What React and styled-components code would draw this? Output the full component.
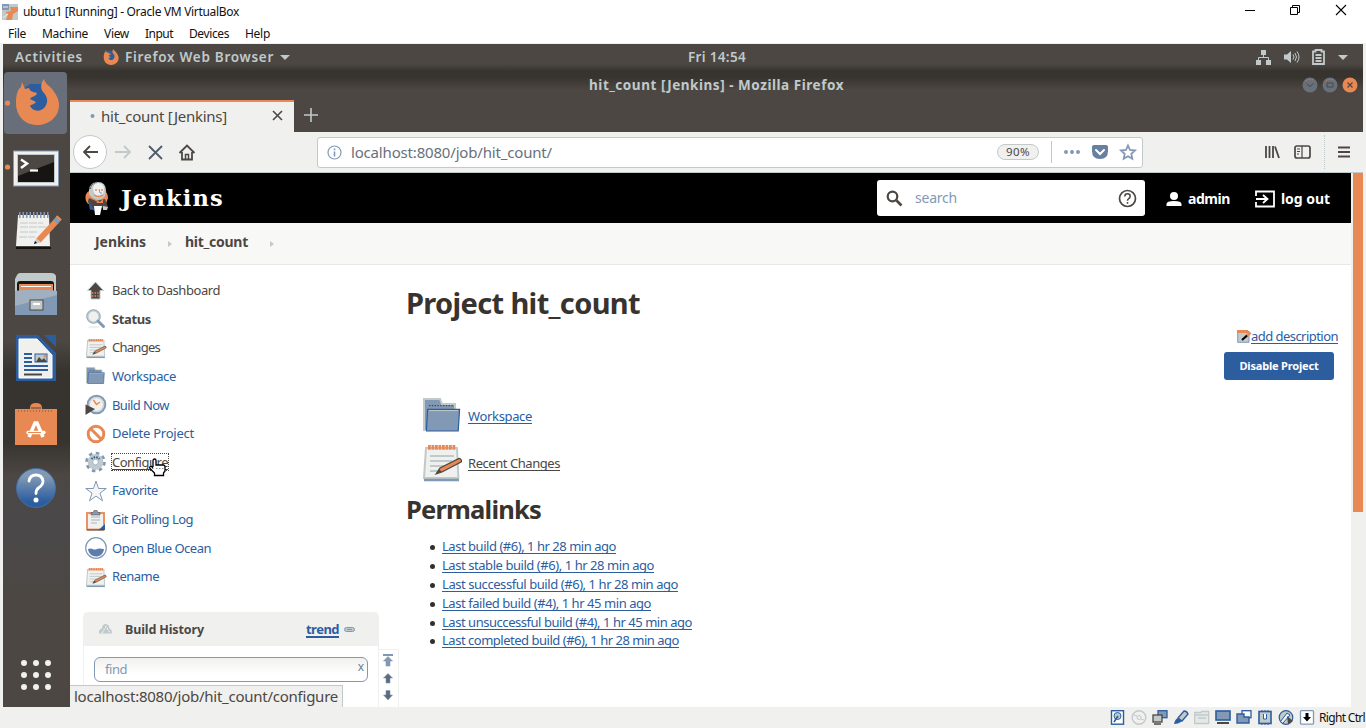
import React, { useLayoutEffect, useRef, useState } from "react";
import styled, { createGlobalStyle, css } from "styled-components";

const c = {
  shell: "#4c4743",
  black: "#000000",
  orange: "#e88954",
  blue: "#2c5d9f",
  steel: "#8299b5",
  silver: "#c0caca",
  light: "#f0f0ee",
  white: "#ffffff",
};

const Global = createGlobalStyle`
  * { box-sizing: border-box; }
  html, body { margin: 0; padding: 0; background: ${c.light}; overflow: hidden; }
  body { font-family: "Noto Sans", "Open Sans", sans-serif; font-size: 13px; color: ${c.shell}; }
  svg { display: block; flex: none; overflow: visible; }
`;

/* ---------- text ---------- */

const Label = styled.span`
  display: inline-block;
  flex: none;
  white-space: pre;
  font-size: ${(p) => p.$size || 13}px;
  font-weight: ${(p) => (p.$bold ? p.$bold : 400)};
  color: ${(p) => p.$color || c.shell};
  line-height: ${(p) => p.$lh || "18px"};
  font-family: ${(p) => p.$family || "inherit"};
  ${(p) =>
    p.$underline &&
    css`
      text-decoration: underline;
      text-decoration-thickness: ${p.$underline}px;
      text-underline-offset: 2px;
      text-decoration-skip-ink: none;
    `}
`;

/* Tracks the letters so that the line takes the given width. */
function Text({ width, children, ...rest }) {
  const ref = useRef(null);
  const [tracking, setTracking] = useState(null);
  useLayoutEffect(() => {
    if (!width || tracking !== null) return;
    const natural = ref.current.getBoundingClientRect().width;
    setTracking((width - natural) / children.length);
  }, [width, tracking, children]);
  return (
    <Label ref={ref} style={tracking === null ? undefined : { letterSpacing: tracking }} {...rest}>
      {children}
    </Label>
  );
}

/* ---------- host window ---------- */

const Screen = styled.div`
  width: 1366px;
  height: 728px;
  display: flex;
  flex-direction: column;
  background: ${c.light};
`;
const HostTitle = styled.header`
  height: 23px;
  flex: none;
  display: flex;
  align-items: center;
  gap: 5px;
  padding: 0 20px 0 2px;
  background: ${c.white};
`;
const HostButtons = styled.div`
  margin-left: auto;
  display: flex;
  gap: 35px;
  padding-bottom: 2px;
`;
const HostMenu = styled.nav`
  height: 20px;
  flex: none;
  display: flex;
  align-items: center;
  gap: 16px;
  padding: 1px 0 0 8px;
  background: ${c.white};
`;
const HostStatus = styled.footer`
  height: 21px;
  flex: none;
  display: flex;
  align-items: center;
  justify-content: flex-end;
  gap: 4px;
  padding-right: 1px;
`;
const Devices = styled.div`
  display: flex;
  gap: 5px;
`;

/* ---------- guest desktop ---------- */

const Guest = styled.div`
  height: 663px;
  margin: 1px 3px 0;
  flex: none;
  display: flex;
  flex-direction: column;
  overflow: hidden;
  background: linear-gradient(${c.shell} 20px, #37332f 27px, #37332f 33px, ${c.shell} 46px);
`;
const TopBar = styled.div`
  height: 27px;
  flex: none;
  display: flex;
  align-items: center;
  padding: 0 15px 1px 12px;
`;
const AppMenu = styled.div`
  display: flex;
  align-items: center;
  gap: 6px;
  width: 585px;
  margin-left: 20px;
`;
const Indicators = styled.div`
  margin-left: auto;
  display: flex;
  align-items: center;
  gap: 13px;
`;
const Workspace = styled.div`
  flex: 1;
  min-height: 0;
  display: flex;
`;
const Dock = styled.aside`
  width: 67px;
  flex: none;
  display: flex;
  flex-direction: column;
  gap: 2px;
  padding: 1px 3px 17px 1px;
  background: linear-gradient(transparent 60px, ${c.shell} 62px, ${c.shell} 270px, #37332f 300px, #37332f 370px, ${c.shell} 405px, #4a484a 450px, ${c.shell} 520px);
`;
const DockTile = styled.div`
  height: 62px;
  flex: none;
  border-radius: 4px;
  background: ${(p) => (p.$active ? "#686f7a" : "transparent")};
`;
const AppsTile = styled.div`
  margin-top: auto;
  padding-left: 17px;
`;
const Browser = styled.main`
  flex: 1;
  min-width: 0;
  display: flex;
  flex-direction: column;
`;
const BrowserTitle = styled.div`
  height: 29px;
  flex: none;
  display: flex;
  align-items: center;
  justify-content: flex-end;
  padding: 0 5px 2px 0;
`;
const WindowButtons = styled.div`
  display: flex;
  gap: 4px;
  margin-left: 458px;
`;
const Tabs = styled.div`
  height: 32px;
  flex: none;
  display: flex;
  align-items: center;
`;
const NewTab = styled.div`
  padding-bottom: 2px;
`;
const Tab = styled.div`
  width: 224px;
  height: 32px;
  display: flex;
  align-items: center;
  padding: 0 11px 3px 20px;
  gap: 6px;
  border-top: 2px solid ${c.orange};
  background: ${c.light};
  margin-right: 10px;
  svg:last-child { margin-left: auto; }
`;
const NavBar = styled.div`
  height: 41px;
  flex: none;
  display: flex;
  align-items: center;
  background: ${c.light};
  border-bottom: 1px solid ${c.silver};
  padding: 0 13px 0 3px;
`;
const NavButtons = styled.div`
  width: 244px;
  display: flex;
  align-items: center;
`;
const BackButton = styled.div`
  width: 34px;
  height: 34px;
  border: 1px solid ${c.silver};
  border-radius: 50%;
  background: ${c.white};
  display: grid;
  place-items: center;
`;
const NavIcon = styled.div`
  width: 32px;
  display: grid;
  place-items: center;
`;
const UrlBar = styled.div`
  width: 826px;
  height: 31px;
  border: 1px solid ${c.silver};
  border-radius: 3px;
  background: ${c.white};
  display: flex;
  align-items: center;
  padding: 0 6px 0 9px;
  gap: 9px;
`;
const UrlTools = styled.div`
  margin-left: auto;
  display: flex;
  align-items: center;
  gap: 12px;
`;
const Zoom = styled.div`
  width: 42px;
  height: 16px;
  display: grid;
  place-items: center;
  border: 1px solid ${c.silver};
  border-radius: 8px;
  background: ${c.light};
`;
const Divider = styled.div`
  width: 1px;
  height: ${(p) => p.$h}px;
  border-left: 1px ${(p) => (p.$dotted ? "dotted" : "solid")} ${c.silver};
`;
const BarEnd = styled.div`
  margin-left: auto;
  display: flex;
  align-items: center;
  gap: 13px;
`;

/* ---------- Jenkins page ---------- */

const Viewport = styled.div`
  position: relative;
  flex: 1;
  min-height: 0;
  display: flex;
  background: ${c.white};
  overflow: hidden;
`;
const Page = styled.div`
  width: 1281px;
  flex: none;
  display: flex;
  flex-direction: column;
`;
const Scrollbar = styled.div`
  width: 12px;
  padding-left: 2px;
  background: ${c.light};
`;
const Thumb = styled.div`
  height: 339px;
  background: ${c.orange};
`;
const PageHeader = styled.header`
  height: 50px;
  flex: none;
  display: flex;
  align-items: center;
  background: ${c.black};
  padding: 0 21px 0 14px;
`;
const Brand = styled.div`
  display: flex;
  align-items: center;
  gap: 11px;
`;
const Search = styled.div`
  width: 268px;
  height: 36px;
  margin-left: auto;
  display: flex;
  align-items: center;
  gap: 12px;
  padding: 0 8px 0 9px;
  background: ${c.white};
  border-radius: 3px;
  svg:last-child { margin-left: auto; }
`;
const UserLink = styled.a`
  display: flex;
  align-items: center;
  gap: 6px;
  margin-left: ${(p) => p.$ml}px;
  padding-top: 1px;
`;
const Crumbs = styled.div`
  height: 42px;
  flex: none;
  display: flex;
  align-items: center;
  padding: 0 0 3px 25px;
  background: #f8f8f7;
  border-bottom: 1px solid #e8e8e6;
`;
const CrumbArrow = styled.div`
  width: ${(p) => p.$w}px;
  padding: 3px 0 0 ${(p) => p.$pl}px;
`;
const PageBody = styled.div`
  flex: 1;
  min-height: 0;
  display: flex;
`;
const Side = styled.div`
  width: 336px;
  flex: none;
  padding: 10.7px 0 0 13px;
`;
const Task = styled.div`
  height: 28.65px;
  display: flex;
  align-items: center;
  gap: 5px;
  padding-left: 2px;
  svg { margin-top: 2px; }
`;
const FocusRing = styled.span`
  position: relative;
  outline: 1px dotted ${c.shell};
  height: 16px;
  display: flex;
  align-items: center;
`;
const Pointer = styled.div`
  position: absolute;
  left: 36px;
  top: 2px;
`;
const HistoryArea = styled.div`
  display: flex;
  margin-top: 21px;
`;
const History = styled.section`
  width: 296px;
  height: 110px;
  border: 1px solid ${c.light};
  border-radius: 5px 5px 0 0;
`;
const HistoryHead = styled.div`
  height: 33px;
  display: flex;
  align-items: center;
  background: ${c.light};
  padding: 0 0 0 14px;
`;
const HistoryTitle = styled.div`
  width: 194px;
  padding-left: 13px;
`;
const TrendEnd = styled.div`
  padding-left: 5px;
`;
const Find = styled.div`
  height: 25px;
  margin: 11px 10px;
  padding: 0 3px 0 10px;
  display: flex;
  align-items: center;
  justify-content: space-between;
  border: 1px solid ${c.steel};
  border-radius: 6px;
  background: linear-gradient(${c.light}, ${c.white} 70%);
`;
const ClearMark = styled.div`
  padding-bottom: 6px;
`;
const Pager = styled.div`
  width: 20px;
  height: 60px;
  margin-top: 37px;
  border: 1px solid ${c.light};
  border-left: 0;
  padding: 4px 1px 0 0;
  display: flex;
  flex-direction: column;
  align-items: center;
  gap: 4.5px;
`;
const Main = styled.div`
  flex: 1;
  padding: 17px 13px 0 0;
  display: flex;
  flex-direction: column;
`;
const Actions = styled.div`
  display: flex;
  flex-direction: column;
  align-items: flex-end;
`;
const DescLink = styled.div`
  height: 18px;
  margin-top: 3px;
  display: flex;
  align-items: center;
`;
const Button = styled.button`
  width: 110px;
  height: 28px;
  margin: 7px 4px 0 0;
  padding: 0;
  border: 0;
  border-radius: 3px;
  background: ${c.blue};
  font-family: inherit;
`;
const BigLinks = styled.div`
  margin-top: 12px;
  padding-left: 16px;
`;
const BigLink = styled.div`
  height: 47px;
  display: flex;
  align-items: center;
  gap: 6px;
`;
const Heading = styled.div`
  height: ${(p) => p.$h}px;
  margin-top: ${(p) => p.$mt || 0}px;
  display: flex;
  align-items: center;
`;
const Links = styled.ul`
  list-style: none;
  margin: 8px 0 0;
  padding: 0 0 0 24px;
`;
const LinkRow = styled.li`
  height: 18.8px;
  display: flex;
  align-items: center;
  gap: 7px;
  &::before {
    content: "";
    width: 5px;
    height: 5px;
    margin-top: 3px;
    border-radius: 50%;
    background: #332f2c;
  }
`;
const StatusTip = styled.div`
  position: absolute;
  left: 0;
  bottom: 0;
  width: 273px;
  height: 22px;
  padding: 0 0 2px 4px;
  display: flex;
  align-items: center;
  background: ${c.light};
  border: 1px solid ${c.silver};
  border-width: 1px 1px 0 0;
`;

/* ---------- drawings ---------- */

const Svg = ({ w, h = w, box, children, ...rest }) => (
  <svg width={w} height={h} viewBox={box || `0 0 ${w} ${h}`} fill="none" {...rest}>
    {children}
  </svg>
);

const Fox = ({ size }) => (
  <Svg w={size} h={size} box="0 0 44 46">
    <path d="M8 10 15 5l11 0 8 8 3 14-8 11H15L8 28Z" fill={c.blue} />
    <path d="M1 24C1 15 3 10 6 8l1-5 3 7 4-1c1 3 3 4 8 5-1 4-5 3-7 6l6 3c-2 3-5 2-6 4 3 6 11 6 15 1 4-6 2-11-2-15-3-4-2-9 1-13 1 5 5 6 8 10 4 5 7 10 7 16 0 12-10 20-22 20S1 37 1 24Z" fill={c.orange} />
  </Svg>
);

const NotePad = ({ size }) => (
  <Svg w={size} h={size} box="0 0 20 20">
    <path d="M2 2.500h15.500l.7 15H1Z" fill={c.light} stroke={c.silver} />
    <path d="M1 18.500h17.500" stroke={c.steel} strokeWidth="1.200" />
    <path d="M3 2.200h14" stroke={c.orange} strokeWidth="2.400" strokeDasharray="1.400 .35" />
    <path d="M4 6.500h12M4 9h11M4 11.500h8M4 14h5" stroke={c.silver} strokeWidth=".9" />
    <path d="m7 15.500 2-3L18.500 7.700q1.500.3 1.200 1.700L10 14.500Z" fill={c.orange} stroke={c.shell} strokeWidth=".6" />
    <path d="m7 15.500 1.500-2.300 1.500 1.100Z" fill={c.shell} />
  </Svg>
);

const Folder = ({ size }) => (
  <Svg w={size} h={size} box="0 0 20 20">
    <path d="M1 17.500v-16h8l1 2.500h6.500v3" fill={c.steel} stroke={c.silver} />
    <path d="M3.500 4.800h12" stroke={c.shell} strokeWidth=".7" strokeDasharray=".7 .7" />
    <path d="M2.800 6.700h16l-.7 10.800H2.200Z" fill={c.steel} stroke={c.blue} strokeWidth=".6" />
    <path d="M3.500 7.300H18" stroke={c.silver} strokeWidth=".5" />
  </Svg>
);

const taskIcons = {
  up: (
    <>
      <path d="m10.500 1 8 8.500H15V18H6V9.500H2.500Z" fill={c.shell} stroke={c.silver} />
      <path d="M7 12h7M7 15h7" stroke={c.orange} strokeWidth="1.300" strokeDasharray="1.400 1.200" />
    </>
  ),
  lens: (
    <>
      <ellipse cx="9" cy="18" rx="6" ry="1.300" fill={c.light} />
      <circle cx="8.500" cy="7.500" r="6" fill={c.light} stroke={c.silver} strokeWidth="2.200" />
      <circle cx="8.500" cy="7.500" r="6.800" stroke={c.steel} strokeWidth=".7" />
      <path d="m13 12 5.500 5.500" stroke={c.steel} strokeWidth="3" strokeLinecap="round" />
    </>
  ),
  clock: (
    <>
      <circle cx="11.500" cy="9.500" r="8.800" fill={c.light} stroke={c.steel} strokeWidth="2" />
      <circle cx="11.500" cy="9.500" r="7" stroke={c.silver} />
      <path d="m8.500 5 3 4.500L15 7" stroke={c.orange} strokeWidth="1.500" />
      <path d="M.5 9.500 10 14 .5 20Z" fill={c.shell} />
    </>
  ),
  no: (
    <>
      <circle cx="11" cy="10" r="7.800" stroke={c.orange} strokeWidth="3" />
      <path d="m5.500 4.500 11 11" stroke={c.orange} strokeWidth="3" />
    </>
  ),
  gear: (
    <>
      <circle cx="10.500" cy="10" r="8.300" stroke={c.steel} strokeWidth="4" strokeDasharray="3.300 3.220" />
      <circle cx="10.500" cy="10" r="5.400" stroke={c.silver} strokeWidth="5" />
      <path d="M6.500 7a5.500 5.500 0 0 1 8 0" stroke={c.blue} strokeWidth="2" strokeDasharray="1.500 1" />
      <circle cx="10.500" cy="10" r="2.800" fill={c.white} stroke={c.steel} strokeWidth=".7" />
    </>
  ),
  star: <path d="m11 0 2.500 7.500h7.800l-6.300 4.600 2.500 7.700-6.500-4.700-6.500 4.700 2.500-7.700L.7 7.500h7.800Z" fill="#f6f6f5" stroke={c.steel} />,
  clip: (
    <>
      <rect x="2" y="3" width="17" height="16.500" fill={c.light} stroke={c.orange} strokeWidth="1.800" />
      <path d="M6 7h9M6 10h9M6 13h6" stroke={c.silver} strokeWidth="1.500" />
      <path d="M13.500 20 20 14v6Z" fill={c.blue} />
      <path d="M6 2.500h2L9 .5h3l1 2h2V5H6Z" fill={c.steel} stroke={c.shell} strokeWidth=".5" />
      <path d="M2 20h17" stroke={c.shell} />
    </>
  ),
  ocean: (
    <>
      <circle cx="11" cy="10" r="10.300" fill={c.white} stroke={c.steel} strokeWidth="1.200" />
      <path d="M3 11c4-2 5 2 9 0 3-1.600 5 .6 7 0-.6 5-4 7.500-8 7.500s-7.500-3-8-7.500Z" fill="#5b7eac" />
    </>
  ),
};

const TaskIcon = ({ name }) => {
  if (name === "note") return <Svg w={22} h={21} box="-0.500 0 22 21"><NotePad size={21} /></Svg>;
  if (name === "folder") return <Svg w={22} h={21} box="-0.500 0 22 21"><Folder size={20} /></Svg>;
  return <Svg w={22} h={21}>{taskIcons[name]}</Svg>;
};

const Hand = () => (
  <Svg w={18} h={18}>
    <path d="M5 9V2.500a1.500 1.500 0 0 1 3 0V7h7.500q1.500 0 1.500 2v4l-1.500 2v2.500h-9V15L2 10.500Q1 9 2.500 8.500T5 10.500" fill={c.white} stroke={c.black} strokeWidth="1.300" />
    <path d="M8 10.500h8" stroke={c.steel} strokeDasharray="1.500 1.500" />
  </Svg>
);

const Butler = () => (
  <Svg w={26} h={34}>
    <path d="M2 20Q0 13 5 10l14-1q5 2 5 8l-2 6H4Z" fill={c.orange} />
    <path d="M5 9Q6 1 14 1t8 9q0 8-8 9-6-1-9-6Z" fill={c.silver} />
    <path d="M9 8q0-5 5-6 6 0 6 6l-1 5-5 2q-4-1-5-7Z" fill={c.light} />
    <path d="M6 8q1-6 7-7" stroke={c.shell} strokeDasharray="1.500 1" strokeWidth="1.500" />
    <path d="M11 9h2m4 0h2M10 14q5 3 9 0" stroke={c.orange} strokeWidth="1.400" />
    <path d="m15 8 1 4h2" stroke={c.steel} />
    <path d="m5 17 7 3 9-2 3 8-8 1-10 2-2-9Z" fill={c.shell} />
    <path d="M5 18q1 7 7 12l-6-2Z" fill={c.blue} />
    <path d="m12 19 4 2 3-3v4h-6Z" fill={c.orange} />
    <path d="M10 25h8l-2 9h-5Z" fill={c.white} />
    <path d="m19 25 5 1-1 3h-4Z" fill={c.silver} />
  </Svg>
);

const dockArt = [
  <g transform="translate(10 7)"><Fox size={46} /></g>,
  <>
    <rect x="9.500" y="15" width="45" height="35" fill={c.light} stroke={c.steel} />
    <rect x="13.500" y="18.500" width="37" height="28" fill="#171513" stroke={c.silver} />
    <path d="M14 19h36v7L14 40Z" fill={c.shell} />
    <path d="m17 23.500 6 4-6 4.500" stroke={c.white} strokeWidth="2.500" />
    <path d="M26 34.500h8" stroke={c.white} strokeWidth="2.200" />
  </>,
  <>
    <path d="M14 15h31l1 31H12Z" fill={c.light} />
    <path d="M12 48h35" stroke={c.black} strokeWidth="1.500" />
    <path d="M15 15h31" stroke={c.steel} strokeWidth="6" strokeDasharray="1.500 2" />
    <path d="M16 23h23M16 27h26M16 32h18M15 37h16" stroke={c.silver} strokeDasharray="8 1" />
    <path d="m34.500 40.500 18-19.500" stroke={c.orange} strokeWidth="6" />
    <path d="m51.500 22 3.500-4" stroke={c.steel} strokeWidth="6" />
    <path d="m54 19 1.500-1.700" stroke={c.orange} strokeWidth="6" />
    <path d="m32 38.500 4.500 4-6.500 1.500Z" fill={c.silver} />
    <path d="m31 41 2 2-3 1Z" fill={c.black} />
  </>,
  <>
    <path d="M13 11q1-2 3-2h31q4 0 5 3v35q0 4-4 4H15q-4 0-4-4V15Z" fill={c.silver} />
    <rect x="13" y="17" width="37" height="13" rx="3" fill="#181614" />
    <path d="M15 20h34v8H15Z" fill={c.orange} />
    <path d="M17 22.500h30" stroke={c.white} />
    <path d="M11 27l8-1h27l7 1v24H11Z" fill="#a0b0c0" />
    <path d="M11 42 53 31v20H11Z" fill={c.steel} />
    <rect x="26" y="36" width="13" height="10" fill={c.silver} stroke={c.shell} />
    <path d="M29 40h7" stroke={c.white} strokeWidth="2" />
  </>,
  <>
    <path d="M12 7h22l18 18v28H12Z" fill={c.blue} />
    <path d="M40 7h12v12Z" fill={c.blue} />
    <path d="M15 11h18l15 16v23H15Z" fill={c.light} stroke={c.white} />
    <path d="M20 26h8M20 30h8M20 34h8M20 38h24M20 42h24" stroke={c.blue} strokeWidth="1.800" />
    <path d="M20 46.500h18" stroke={c.shell} strokeWidth="2" />
    <rect x="31" y="26" width="12" height="8" fill={c.silver} stroke={c.blue} />
    <path d="m32 34 3-5 3 3 2-2 3 4Z" fill={c.shell} />
    <circle cx="41" cy="28" r="1.500" fill={c.orange} />
  </>,
  <>
    <path d="M11 17h42v36H11Z" fill={c.orange} />
    <path d="M26 16q0-5 6-5t6 5v3H26Z" fill={c.orange} />
    <path d="M27 16h10" stroke={c.shell} />
    <path d="M14 19h36" stroke={c.shell} strokeWidth=".8" strokeDasharray="1 2" />
    <path d="m25 45 6-14h2l6 14" stroke={c.white} strokeWidth="3.500" />
    <path d="M24 40.500h16" stroke={c.white} strokeWidth="3.400" strokeLinecap="round" />
    <path d="M24 40.500h13" stroke={c.orange} strokeWidth="1" />
  </>,
  <>
    <defs>
      <linearGradient id="help" x2="0" y2="1">
        <stop offset=".2" stopColor={c.steel} />
        <stop offset=".85" stopColor={c.blue} />
      </linearGradient>
    </defs>
    <circle cx="32" cy="32" r="19.500" fill="url(#help)" stroke="#416da8" />
    <path d="M25 25q1-6 7-6t7 6q0 4-4 6.500-3 2-3 6" stroke={c.white} strokeWidth="2.800" strokeLinecap="round" />
    <circle cx="32" cy="44" r="2.500" fill={c.white} />
  </>,
];

const Ring = ({ kind }) => (
  <Svg w={16}>
    <circle cx="8" cy="8" r="7.500" fill={kind === "x" ? c.orange : "#68717b"} />
    {kind === "x" && <path d="m5.500 5.500 5 5m0-5-5 5" stroke={c.shell} strokeWidth="1.200" />}
    {kind === "min" && <path d="m4.500 6.500 3.500 3 3.500-3" stroke={c.shell} />}
    {kind === "max" && <path d="M5 6h6v4H5Z" stroke={c.shell} />}
    {kind !== "x" && <path d="M4 3.500q4-2.500 8 0" stroke={c.orange} strokeDasharray="1 2" />}
  </Svg>
);

const PageArrow = ({ kind }) => (
  <Svg w={10} h={13}>
    {kind === "top" && <path d="M0 1h10" stroke={c.steel} strokeWidth="2" />}
    <path
      d={kind === "down" ? "M3 1.500h4V6h2.500L5 11 .5 6H3Z" : "M5 2.500 9.500 7H7v5H3V7H.5Z"}
      fill={kind === "top" ? c.steel : "#5d6a7b"}
      stroke={c.steel}
      strokeWidth=".6"
    />
    {kind === "top" && <path d="M4.500 7h1" stroke={c.orange} />}
  </Svg>
);

const deviceArt = [
  <>
    <rect x="1.500" y=".7" width="12" height="13.500" fill={c.white} stroke={c.blue} strokeWidth="1.400" />
    <circle cx="7.500" cy="6" r="3.500" fill={c.silver} stroke={c.blue} />
    <path d="m4 12 4-6" stroke={c.blue} strokeWidth="1.600" />
  </>,
  <>
    <circle cx="8" cy="7.500" r="6.800" fill={c.light} stroke={c.silver} strokeWidth="1.400" />
    <circle cx="8" cy="7.500" r="2" stroke={c.silver} />
    <path d="m3 5 3 1m4 3 3 1" stroke={c.silver} />
  </>,
  <>
    <rect x="6" y=".7" width="9" height="7" fill={c.steel} stroke={c.blue} strokeWidth="1.300" />
    <rect x="1" y="5" width="9" height="7" fill={c.silver} stroke={c.shell} strokeWidth="1.300" />
    <path d="M2 14h7" stroke={c.shell} strokeWidth="1.500" />
  </>,
  <>
    <path d="m5 8 6-7q3 0 4 3l-6 7Z" fill={c.silver} stroke={c.blue} strokeWidth="1.300" />
    <path d="M5 8q-3 1-4 6 5 0 8-3Z" fill={c.blue} />
  </>,
  <path d="M.7 13.500v-11h6l1-1h7v12Zm0-8.500h14M4 8h8" fill="#e5e8e8" stroke={c.silver} strokeWidth="1.300" />,
  <>
    <rect x="1" y="1" width="14" height="9" fill={c.steel} stroke={c.blue} strokeWidth="1.600" />
    <path d="M2 13h12" stroke={c.shell} strokeWidth="2" />
  </>,
  <>
    <rect x="6" y=".7" width="9" height="7" fill={c.white} stroke={c.blue} strokeWidth="1.300" />
    <path d="M1 4h7v3h5v6H1Z" fill={c.steel} stroke={c.blue} strokeWidth="1.400" />
  </>,
  <>
    <rect x="2" y="1.500" width="12" height="12" fill={c.silver} stroke={c.blue} strokeWidth="1.600" />
    <path d="M5 0v15M8 0v15M11 0v15" stroke={c.blue} strokeDasharray="1.500 12" />
    <path d="M6.500 4v5h3V4" stroke={c.blue} fill={c.white} />
  </>,
  <>
    <circle cx="8" cy="7.500" r="6.800" fill={c.silver} stroke={c.blue} strokeWidth="1.200" />
    <path d="m3 11 6-8 3 2-7 8" fill={c.light} stroke={c.blue} />
    <path d="m9 6 6 5-5 3Z" fill={c.shell} />
  </>,
  <>
    <rect x="1.500" y=".7" width="13" height="13.500" rx="1" fill={c.white} stroke={c.steel} strokeWidth="1.300" />
    <path d="M6.500 3h3v4H12l-4 4.500L4 7h2.500Z" fill={c.black} />
  </>,
];

/* ---------- data ---------- */

const menu = [["File", 18], ["Machine", 46], ["View", 25], ["Input", 28], ["Devices", 40], ["Help", 25]];

const tasks = [
  ["up", "Back to Dashboard", 108, c.shell],
  ["lens", "Status", 39, c.shell],
  ["note", "Changes", 48, c.shell],
  ["folder", "Workspace", 64, c.blue],
  ["clock", "Build Now", 57, c.blue],
  ["no", "Delete Project", 82, c.blue],
  ["gear", "Configure", 56, c.shell],
  ["star", "Favorite", 46, c.blue],
  ["clip", "Git Polling Log", 81, c.blue],
  ["ocean", "Open Blue Ocean", 99, c.blue],
  ["note", "Rename", 47, c.blue],
];

const permalinks = [
  ["Last build (#6), 1 hr 28 min ago", 174],
  ["Last stable build (#6), 1 hr 28 min ago", 212],
  ["Last successful build (#6), 1 hr 28 min ago", 236],
  ["Last failed build (#4), 1 hr 45 min ago", 209],
  ["Last unsuccessful build (#4), 1 hr 45 min ago", 250],
  ["Last completed build (#6), 1 hr 28 min ago", 237],
];

/* ---------- sections ---------- */

function TaskList() {
  return tasks.map(([icon, name, width, color]) => {
    const label = (
      <Text width={width} $color={color} $bold={name === "Status" ? 700 : 0} $underline={name === "Configure" ? 1 : 0}>
        {name}
      </Text>
    );
    return (
      <Task key={name}>
        <TaskIcon name={icon} />
        {name === "Configure" ? (
          <FocusRing>
            {label}
            <Pointer><Hand /></Pointer>
          </FocusRing>
        ) : (
          label
        )}
      </Task>
    );
  });
}

function BuildHistory() {
  return (
    <HistoryArea>
      <History>
        <HistoryHead>
          <Svg w={14} h={12}>
            <path d="M1 10.500q-1-4 3-5Q4 1 8 1q4 1 3 4 3 1 3 5.500Z" fill={c.silver} />
            <path d="m4 10 5-8m0 3 3 5" stroke={c.white} strokeDasharray="2 1" />
          </Svg>
          <HistoryTitle><Text width={79} $bold={700} $size={12.5}>Build History</Text></HistoryTitle>
          <Text width={33} $bold={700} $color={c.blue} $underline={1.5}>trend</Text>
          <TrendEnd>
            <Svg w={11} h={5}>
              <rect x=".5" y=".5" width="10" height="4" rx="2" fill={c.silver} stroke={c.steel} />
              <path d="M3 2.500h5" stroke={c.steel} />
            </Svg>
          </TrendEnd>
        </HistoryHead>
        <Find>
          <Text width={22} $color={c.steel}>find</Text>
          <ClearMark><Text $size={12} $color="#68809f">x</Text></ClearMark>
        </Find>
      </History>
      <Pager>
        <PageArrow kind="top" />
        <PageArrow kind="up" />
        <PageArrow kind="down" />
      </Pager>
    </HistoryArea>
  );
}

function Project() {
  return (
    <Main>
      <Heading $h={42}><Text width={234} $size={29} $bold={700} $lh="40px" $color="#37332f">Project hit_count</Text></Heading>
      <Actions>
        <DescLink>
          <Svg w={14} h={14}>
            <path d="M.7 2.500h11.300v10.800H.7Z" fill={c.silver} stroke={c.steel} />
            <path d="M0 2.500h11" stroke={c.orange} strokeWidth="3" />
            <path d="m8 8.500 5.500-5" stroke={c.orange} strokeWidth="3" />
            <path d="m5 11 5-4.500" stroke={c.black} strokeWidth="2" />
          </Svg>
          <Text width={87} $color={c.blue} $underline={1}>add description</Text>
        </DescLink>
        <Button><Text width={79} $size={11} $bold={700} $color={c.white} $lh="28px">Disable Project</Text></Button>
      </Actions>
      <BigLinks>
        <BigLink><Folder size={40} /><Text width={64} $color={c.blue} $underline={1}>Workspace</Text></BigLink>
        <BigLink><NotePad size={40} /><Text width={92} $underline={1}>Recent Changes</Text></BigLink>
      </BigLinks>
      <Heading $h={40} $mt={3}><Text width={135} $size={25.5} $bold={700} $lh="40px" $color="#37332f">Permalinks</Text></Heading>
      <Links>
        {permalinks.map(([name, width]) => (
          <LinkRow key={name}><Text width={width} $color={c.blue} $underline={1}>{name}</Text></LinkRow>
        ))}
      </Links>
    </Main>
  );
}

function JenkinsPage() {
  return (
    <Viewport>
      <Page>
        <PageHeader>
          <Brand>
            <Butler />
            <Text width={103} $size={22.5} $bold={700} $lh="32px" $color={c.white} $family='"DejaVu Serif", serif'>Jenkins</Text>
          </Brand>
          <Search>
            <Svg w={17}>
              <circle cx="6.500" cy="6.500" r="4.800" stroke={c.shell} strokeWidth="2.200" />
              <path d="m10.500 10.500 5 5" stroke={c.shell} strokeWidth="2.600" />
            </Svg>
            <Text width={42} $size={14} $color={c.steel}>search</Text>
            <Svg w={19}>
              <circle cx="9.500" cy="9.500" r="8" stroke={c.shell} strokeWidth="1.700" />
              <path d="M6.800 7.500q0-2.700 2.700-2.700t2.700 2.500q0 1.700-1.700 2.500-1 .5-1 2M9.500 13v1.700" stroke={c.shell} strokeWidth="1.500" />
            </Svg>
          </Search>
          <UserLink $ml={21}>
            <Svg w={16} h={16}>
              <circle cx="8" cy="5" r="4" fill={c.white} />
              <path d="M.5 15v-2q0-3 7.500-3t7.500 3v2Z" fill={c.white} />
            </Svg>
            <Text width={42} $size={14} $bold={700} $color={c.white}>admin</Text>
          </UserLink>
          <UserLink $ml={25}>
            <Svg w={20} h={18}>
              <path d="M1 6V1.500h18v15H1V12M1 9h11m-4-4 4.500 4L8 13" stroke={c.white} strokeWidth="1.800" />
            </Svg>
            <Text width={49} $size={14} $bold={700} $color={c.white}>log out</Text>
          </UserLink>
        </PageHeader>
        <Crumbs>
          <Text width={51} $size={14} $bold={700}>Jenkins</Text>
          <CrumbArrow $w={39} $pl={22}><Svg w={4} h={6}><path d="m0 0 4 3-4 3Z" fill={c.silver} /></Svg></CrumbArrow>
          <Text width={63} $size={14} $bold={700}>hit_count</Text>
          <CrumbArrow $w={30} $pl={22}><Svg w={4} h={6}><path d="m0 0 4 3-4 3Z" fill={c.silver} /></Svg></CrumbArrow>
        </Crumbs>
        <PageBody>
          <Side>
            <TaskList />
            <BuildHistory />
          </Side>
          <Project />
        </PageBody>
      </Page>
      <Scrollbar><Thumb /></Scrollbar>
      <StatusTip><Text width={264} $size={15} $lh="20px">localhost:8080/job/hit_count/configure</Text></StatusTip>
    </Viewport>
  );
}

function NavigationBar() {
  return (
    <NavBar>
      <NavButtons>
        <BackButton>
          <Svg w={16} h={14}><path d="M16 7H2m6-6L2 7l6 6" stroke={c.shell} strokeWidth="1.800" /></Svg>
        </BackButton>
        <NavIcon>
          <Svg w={16} h={14}><path d="M0 7h15M9 1l6 6-6 6" stroke={c.silver} strokeWidth="1.800" /></Svg>
        </NavIcon>
        <NavIcon><Svg w={15} h={15}><path d="m1 1 13 13m0-13L1 14" stroke="#515a6b" strokeWidth="1.800" /></Svg></NavIcon>
        <NavIcon>
          <Svg w={18} h={17}>
            <path d="m1.500 9 7.500-7.500L16.500 9M4 8v7.500h10V8" stroke={c.shell} strokeWidth="1.800" />
            <path d="M7.500 15.500v-5h3v5" stroke={c.shell} strokeWidth="1.500" />
          </Svg>
        </NavIcon>
      </NavButtons>
      <UrlBar>
        <Svg w={15}>
          <circle cx="7.500" cy="7.500" r="6.500" stroke={c.steel} strokeWidth="1.200" />
          <path d="M7.500 6.500v5M7.500 3.500v1.700" stroke={c.steel} strokeWidth="1.600" />
        </Svg>
        <Text width={201} $size={15} $lh="20px" $color="#68717b">localhost:8080/job/hit_count/</Text>
        <UrlTools>
          <Zoom><Text width={24} $size={11.5} $lh="14px">90%</Text></Zoom>
          <Divider $h={22} />
          <Svg w={16} h={4}>
            <circle cx="2" cy="2" r="2" fill={c.steel} /><circle cx="8" cy="2" r="2" fill={c.steel} /><circle cx="14" cy="2" r="2" fill={c.steel} />
          </Svg>
          <Svg w={16} h={14}>
            <path d="M0 2q0-2 2-2h12q2 0 2 2v4q0 8-8 8T0 6Z" fill="#68809f" />
            <path d="m4 5 4 4 4-4" stroke={c.white} strokeWidth="2" strokeLinecap="round" />
          </Svg>
          <Svg w={16} h={16}>
            <path d="m8 1.500 2 4.500 5 .5-3.700 3.300 1 5L8 12.300l-4.300 2.500 1-5L1 6.500 6 6Z" stroke={c.steel} strokeWidth="1.800" />
          </Svg>
        </UrlTools>
      </UrlBar>
      <BarEnd>
        <Svg w={17} h={14}><path d="M2 1v12m3.500-12v12M9 1v12M11 1.500l4 11.500" stroke={c.shell} strokeWidth="1.800" /></Svg>
        <Svg w={17} h={14}>
          <rect x="1" y="1" width="15" height="12" rx="2" stroke={c.shell} strokeWidth="1.700" />
          <path d="M8 1v12M3 4h3M3 6.500h3M3 9h2" stroke={c.shell} strokeWidth="1.200" />
        </Svg>
        <Divider $h={34} $dotted />
        <Svg w={12} h={12}><path d="M0 1.500h12M0 6h12M0 10.500h12" stroke={c.shell} strokeWidth="1.800" /></Svg>
      </BarEnd>
    </NavBar>
  );
}

function DockBar() {
  return (
    <Dock>
      {dockArt.map((art, i) => (
        <DockTile key={i} $active={i === 0}>
          <Svg w={64} h={62}>
            {i < 2 && <circle cx="3.500" cy={i ? 31 : 31} r="2.600" fill={c.orange} />}
            {art}
          </Svg>
        </DockTile>
      ))}
      <AppsTile>
        <Svg w={30} h={30}>
          {[0, 1, 2].map((y) => [0, 1, 2].map((x) => <circle key={`${x}${y}`} cx={3 + 12 * x} cy={3 + 12 * y} r="3" fill={c.light} />))}
        </Svg>
      </AppsTile>
    </Dock>
  );
}

export default function App() {
  return (
    <Screen>
      <Global />
      <HostTitle>
        <Svg w={16}>
          <rect width="16" height="16" fill={c.silver} />
          <path d="M0 0h7v6H0Z" fill={c.steel} />
          <path d="M8 3h8v4l-5 3-1 6H4l2-6-3-2 6-1Z" fill={c.orange} />
          <path d="M1 3h5M1 14l5-4" stroke={c.light} />
        </Svg>
        <Text width={216} $size={12} $color="#111">ubutu1 [Running] - Oracle VM VirtualBox</Text>
        <HostButtons>
          <Svg w={10}><path d="M0 5.500h10" stroke="#000" /></Svg>
          <Svg w={11}><path d="M.5 2.500h7v7h-7Zm2 0v-2h7v7h-2" stroke="#000" /></Svg>
          <Svg w={10}><path d="m0 0 10 10m0-10L0 10" stroke="#000" strokeWidth="1.100" /></Svg>
        </HostButtons>
      </HostTitle>
      <HostMenu>
        {menu.map(([name, width]) => <Text key={name} width={width} $size={12} $color="#111">{name}</Text>)}
      </HostMenu>
      <Guest>
        <TopBar>
          <Text width={68} $size={13.5} $bold={600} $color={c.silver}>Activities</Text>
          <AppMenu>
            <Fox size={16} />
            <Text width={149} $size={13.5} $bold={600} $color={c.silver}>Firefox Web Browser</Text>
            <Svg w={10} h={5}><path d="M0 0h10L5 5Z" fill={c.silver} /></Svg>
          </AppMenu>
          <Text width={58} $size={13.5} $bold={600} $color={c.silver}>Fri 14:54</Text>
          <Indicators>
            <Svg w={15} h={15}>
              <path d="M5 0h5v5H5ZM0 10h5v5H0ZM10 10h5v5h-5Z" fill={c.silver} />
              <path d="M7.500 4v3.500M2.500 10V7.500h10V10" stroke={c.silver} />
            </Svg>
            <Svg w={15} h={14}>
              <path d="M0 4.500h3L7 1v12L3 9.500H0Z" fill={c.silver} />
              <path d="M9 4.500q2 2.500 0 5M11 3q3 4 0 8M13 1.500q4 5.500 0 11" stroke={c.silver} />
            </Svg>
            <Svg w={13} h={16}><path d="M1 2.500h2.500V1h6v1.500H12V15H1ZM3.500 6h6m-6 3h6m-6 3h6" stroke={c.silver} strokeWidth="1.800" /></Svg>
            <Svg w={10} h={5}><path d="M0 0h10L5 5Z" fill={c.silver} /></Svg>
          </Indicators>
        </TopBar>
        <Workspace>
          <DockBar />
          <Browser>
            <BrowserTitle>
              <Text width={255} $size={13.5} $bold={700} $color={c.silver}>hit_count [Jenkins] - Mozilla Firefox</Text>
              <WindowButtons><Ring kind="min" /><Ring kind="max" /><Ring kind="x" /></WindowButtons>
            </BrowserTitle>
            <Tabs>
              <Tab>
                <Svg w={5}><circle cx="2.500" cy="3" r="2" fill={c.steel} /></Svg>
                <Text width={126} $size={15} $lh="20px">hit_count [Jenkins]</Text>
                <Svg w={11}><path d="m1 1 9 9m0-9-9 9" stroke={c.shell} strokeWidth="1.600" /></Svg>
              </Tab>
              <NewTab><Svg w={14}><path d="M7 0v14M0 7h14" stroke={c.silver} strokeWidth="1.600" /></Svg></NewTab>
            </Tabs>
            <NavigationBar />
            <JenkinsPage />
          </Browser>
        </Workspace>
      </Guest>
      <HostStatus>
        <Devices>{deviceArt.map((art, i) => <Svg key={i} w={16} h={15}>{art}</Svg>)}</Devices>
        <Text width={46} $size={12} $color="#111">Right Ctrl</Text>
      </HostStatus>
    </Screen>
  );
}
